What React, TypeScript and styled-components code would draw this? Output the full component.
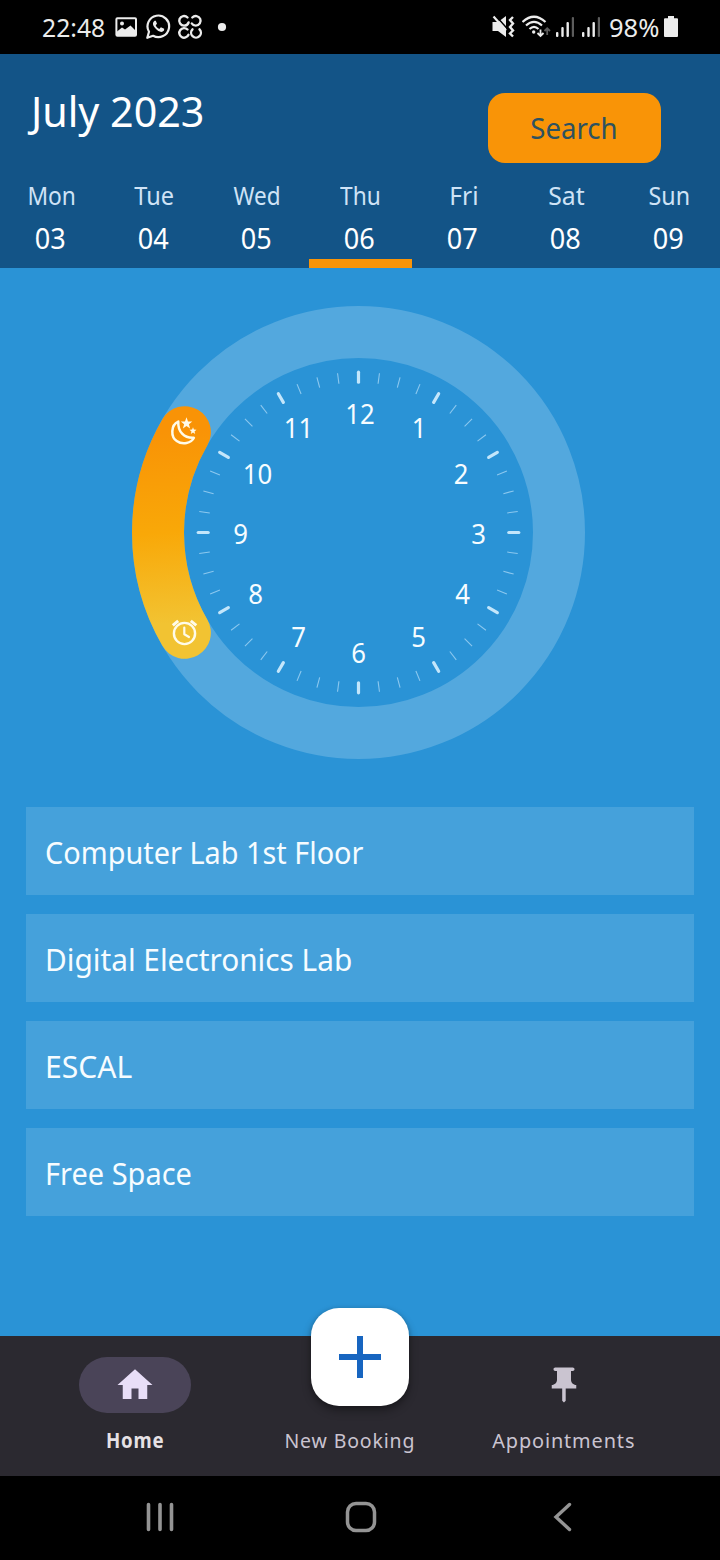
import React from "react";
import styled, { createGlobalStyle } from "styled-components";

const GlobalStyle = createGlobalStyle`
  * { box-sizing: border-box; }
  body { margin: 0; background: #000; font-family: "Noto Sans", "Open Sans", sans-serif; }
`;

const Screen = styled.div`
  width: 720px;
  height: 1560px;
  display: flex;
  flex-direction: column;
  background: #2a93d6;
  overflow: hidden;
`;

const Text = styled.span<{ $sx?: number; $origin?: string }>`
  display: inline-block;
  white-space: nowrap;
  transform: scaleX(${(p) => p.$sx ?? 1});
  transform-origin: ${(p) => p.$origin ?? "center"};
`;

const StatusBar = styled.div`
  height: 54px;
  flex: none;
  background: #000;
  color: #ececec;
  display: flex;
  justify-content: space-between;
  align-items: center;
  padding: 0 40px 0 42px;
  font-size: 26px;
  line-height: 54px;
`;

const StatusGroup = styled.div`
  display: flex;
  align-items: center;
  height: 54px;
`;

const Glyph = styled.svg<{ $ml?: number }>`
  display: block;
  flex: none;
  margin-left: ${(p) => p.$ml ?? 0}px;
`;

const StatusText = styled.div<{ $w: number; $ml?: number }>`
  width: ${(p) => p.$w}px;
  margin-left: ${(p) => p.$ml ?? 0}px;
  white-space: nowrap;
`;

const Header = styled.header`
  height: 214px;
  flex: none;
  background: #135487;
  display: flex;
  flex-direction: column;
`;

const HeaderTop = styled.div`
  height: 122px;
  display: flex;
  justify-content: space-between;
  padding: 39px 59px 0 31px;
`;

const Month = styled.h1`
  margin: -9px 0 0;
  font-size: 42.5px;
  font-weight: 400;
  line-height: 54px;
  color: #fff;
`;

const SearchButton = styled.button`
  width: 173px;
  height: 70px;
  border: 0;
  border-radius: 17px;
  background: #f99407;
  color: #2d5260;
  font: inherit;
  font-size: 29px;
  line-height: 68px;
  padding: 0 2px 0 0;
`;

const Week = styled.div`
  display: grid;
  grid-template-columns: repeat(7, 103px);
  height: 92px;
  margin-right: -1px;
`;

const Day = styled.div<{ $active?: boolean }>`
  display: flex;
  flex-direction: column;
  align-items: center;
  border-bottom: 9px solid ${(p) => (p.$active ? "#f99407" : "transparent")};
`;

const DayName = styled.div`
  font-size: 25px;
  line-height: 30px;
  margin-top: 4px;
  color: #cfe3f6;
`;

const DayNumber = styled.div`
  font-size: 28.5px;
  line-height: 36px;
  margin-top: 10px;
  padding-right: 2px;
  color: #fff;
`;

const Main = styled.main`
  height: 1068px;
  flex: none;
  display: flex;
  flex-direction: column;
`;

const ClockFace = styled.svg`
  display: block;
  margin: 32px 0 0 126px;
  flex: none;
  font-size: 28px;
`;

const RoomList = styled.ul`
  list-style: none;
  margin: 42px 26px 0;
  padding: 0;
  display: flex;
  flex-direction: column;
  gap: 19px;
`;

const Room = styled.li`
  height: 88px;
  background: #45a1db;
  color: #f6fcff;
  font-size: 31px;
  line-height: 90px;
  padding-left: 19px;
`;

const TabBar = styled.nav`
  position: relative;
  height: 140px;
  flex: none;
  background: #2b2930;
  display: flex;
  justify-content: center;
  padding-right: 21px;
`;

const Tab = styled.div<{ $active?: boolean }>`
  width: 214.5px;
  padding-top: 21px;
  display: flex;
  flex-direction: column;
  align-items: center;
  font-size: 20.5px;
  letter-spacing: 0.9px;
  line-height: 28px;
  font-weight: ${(p) => (p.$active ? 700 : 400)};
  color: ${(p) => (p.$active ? "#e6e1e5" : "#cac4d0")};
`;

const Indicator = styled.div<{ $active?: boolean }>`
  width: 112px;
  height: 56px;
  margin-bottom: 13px;
  border-radius: 28px;
  display: flex;
  align-items: center;
  justify-content: center;
  background: ${(p) => (p.$active ? "#4a4458" : "transparent")};
`;

const AddButton = styled.button`
  position: absolute;
  left: 311px;
  top: -28px;
  width: 98px;
  height: 98px;
  padding: 0;
  border: 0;
  border-radius: 28px;
  background: #fff;
  box-shadow: 0 5px 10px rgba(0, 0, 0, 0.32), 0 1px 4px rgba(0, 0, 0, 0.2);
  display: flex;
  align-items: center;
  justify-content: center;
`;

const SystemBar = styled.div`
  height: 84px;
  flex: none;
  background: #000;
  display: flex;
  align-items: center;
  padding: 0 0 2px 140px;
`;

const week: [string, string, number][] = [
  ["Mon", "03", 0.91],
  ["Tue", "04", 0.94],
  ["Wed", "05", 0.9],
  ["Thu", "06", 0.91],
  ["Fri", "07", 0.98],
  ["Sat", "08", 0.99],
  ["Sun", "09", 0.93],
];

const rooms: [string, number][] = [
  ["Computer Lab 1st Floor", 0.931],
  ["Digital Electronics Lab", 0.961],
  ["ESCAL", 0.97],
  ["Free Space", 0.935],
];

const numerals: [string, number, number][] = [
  ["12", 360, 414],
  ["1", 419, 428],
  ["2", 461, 473.5],
  ["3", 478.5, 533.5],
  ["4", 462.5, 593.5],
  ["5", 418.5, 636.5],
  ["6", 358.5, 653],
  ["7", 298.5, 636.5],
  ["8", 255.5, 593.5],
  ["9", 240.5, 534],
  ["10", 257.5, 474],
  ["11", 298.5, 428],
];

function Signal({ x, ml }: { x: number; ml: number }) {
  return (
    <Glyph $ml={ml} width="19" height="54" viewBox={`${x} 0 19 54`} fill="#ececec">
      <rect x={x} y="32" width="2.4" height="5" rx="1" />
      <rect x={x + 5.3} y="27" width="2.4" height="10" rx="1" />
      <rect x={x + 10.5} y="22" width="2.4" height="15" rx="1" />
      <rect x={x + 15.8} y="17" width="2.2" height="20" rx="1" fill="#5c5c5c" />
    </Glyph>
  );
}

function Clock() {
  const cx = 358.5;
  const cy = 532.5;
  return (
    <ClockFace width="466" height="465" viewBox="126 300 466 465">
      <defs>
        <linearGradient id="arc" gradientUnits="userSpaceOnUse" x1="160" y1="432" x2="176" y2="633">
          <stop offset="0" stopColor="#f99306" />
          <stop offset="0.5" stopColor="#f9a808" />
          <stop offset="0.95" stopColor="#f2c332" />
        </linearGradient>
      </defs>
      <circle cx={cx} cy={cy} r="200.5" fill="none" stroke="#53a8de" strokeWidth="52" />
      <path
        d="M184.9 632.8A200.5 200.5 0 0 1 184.9 432.2"
        fill="none"
        stroke="url(#arc)"
        strokeWidth="52"
        strokeLinecap="round"
      />
      {Array.from({ length: 48 }, (_, i) => {
        const major = i % 4 === 0;
        return (
          <line
            key={i}
            x1={cx}
            x2={cx}
            y1={major ? cy - 160.3 : cy - 160.6}
            y2={major ? cy - 150.3 : cy - 150}
            stroke={major ? "#c3e6fb" : "#8cc8ef"}
            strokeWidth={major ? 3.2 : 1.1}
            strokeLinecap={major ? "round" : "butt"}
            transform={`rotate(${i * 7.5} ${cx} ${cy})`}
          />
        );
      })}
      {numerals.map(([n, x, y]) => (
        <text key={n} fill="#f6fcff" textAnchor="middle" transform={`translate(${x} ${y + 10}) scale(0.92 1)`}>
          {n}
        </text>
      ))}
      <g fill="none" stroke="#fffbe8" strokeWidth="2.5" strokeLinejoin="round" strokeLinecap="round">
        <path d="M178.3 421.6C170.5 425 170.7 437 176.7 441C182.5 445.2 191.3 443.3 193.9 437.8C184 438.5 177.7 431.5 178.3 421.6Z" />
        <circle cx="184.5" cy="633.5" r="10.6" strokeWidth="2.4" />
        <path d="M184.3 627.5V634.2L189 637" strokeWidth="2.2" />
        <path d="M172.8 625.3L178.2 620.8M196.3 625.3L190.8 620.8" strokeWidth="3" strokeLinecap="butt" />
      </g>
      <g fill="#fffbe8">
        <path d="M186.5 417.3L188 421.4L192.3 421.5L188.9 424.2L190.1 428.4L186.5 426L182.9 428.4L184.1 424.2L180.8 421.5L185 421.4Z" />
        <path d="M193 427.2L193.9 429.6L196.5 429.8L194.5 431.4L195.2 434L193 432.5L190.8 434L191.5 431.4L189.5 429.8L192.1 429.6Z" />
      </g>
    </ClockFace>
  );
}

export default function App() {
  return (
    <Screen>
      <GlobalStyle />
      <StatusBar>
        <StatusGroup>
          <StatusText $w={73}>
            <Text $sx={0.95} $origin="left">22:48</Text>
          </StatusText>
          <Glyph width="22" height="54" viewBox="115 0 22 54">
            <rect x="116.4" y="18.2" width="19.6" height="17.6" rx="1" fill="none" stroke="#ececec" strokeWidth="2" />
            <path d="M117 36V31.5L122 27.5L125 29.5L130.5 25.5L136 31V36Z" fill="#ececec" />
            <circle cx="122" cy="23.5" r="2" fill="#ececec" />
          </Glyph>
          <Glyph $ml={9} width="26" height="54" viewBox="146 0 26 54">
            <path
              d="M147.3 37.8L149 31.8A10.8 10.8 0 1 1 153.1 35.8Z"
              fill="none" stroke="#ececec" strokeWidth="2.2" strokeLinejoin="round"
            />
            <path
              d="M154.6 20.8C152.3 22.5 152.4 25 155.3 28.3C158.3 31.7 161.8 33.2 164 30.6L164.2 28.8L160.9 27.2L159.3 28.9C157.6 28.2 156.4 26.9 155.7 25.3L157 23.8L155.8 20.8Z"
              fill="#ececec"
            />
          </Glyph>
          <Glyph $ml={5} width="26" height="54" viewBox="177 0 26 54" fill="none" stroke="#ececec" strokeWidth="2.4" strokeLinecap="round">
            <path d="M187.5 17.5A4.8 4.8 0 1 0 184.2 25.6Q187.5 25.6 188.6 22.5" />
            <path d="M192.3 17.5A4.8 4.8 0 1 1 195.8 25.6Q193 25.6 191.8 23.5" />
            <path d="M187.5 29.5A4.8 4.8 0 1 0 188.5 34.8" />
            <path d="M192.5 29.3A4.9 4.9 0 1 0 199.5 29.3" />
          </Glyph>
          <Glyph $ml={14} width="10" height="54" viewBox="217 0 10 54">
            <circle cx="222" cy="27" r="4.1" fill="#ececec" />
          </Glyph>
        </StatusGroup>
        <StatusGroup>
          <Glyph width="24" height="54" viewBox="491 0 24 54">
            <path d="M492.5 22H498L506 16V37L498 31H492.5Z" fill="#ececec" />
            <path d="M495.5 15.5L508 29.5" stroke="#000" strokeWidth="1.5" />
            <path d="M493.5 16.5L506 30.5" stroke="#ececec" strokeWidth="2.2" />
            <path d="M513 17L510 20L513 23.5L510 27L513 30.5L510 33.5L513 36.5" fill="none" stroke="#ececec" strokeWidth="2.4" />
          </Glyph>
          <Glyph $ml={7} width="30" height="54" viewBox="522 0 30 54" fill="none" stroke="#ececec" strokeWidth="2.2">
            <path d="M522.5 22Q534 11.5 545.5 22" />
            <path d="M526 25.5Q534 18.2 542 25.5" />
            <path d="M529.5 29Q534 24.7 538.5 29" />
            <circle cx="533.7" cy="32" r="1.7" fill="#ececec" stroke="none" />
            <path d="M540.5 29.5V36M537.5 33L540.5 36L543.5 33" strokeWidth="1.8" />
            <path d="M547.2 35V28.5M544.5 31L547.2 28.3L550 31" stroke="#5c5c5c" strokeWidth="1.8" />
          </Glyph>
          <Signal x={556} ml={4} />
          <Signal x={582} ml={7} />
          <StatusText $w={54} $ml={8}>
            <Text $sx={0.98} $origin="left">98%</Text>
          </StatusText>
          <Glyph width="17" height="54" viewBox="663 0 17 54">
            <path d="M668 16H674V18.3H677Q678 18.3 678 19.3V36Q678 37 677 37H665Q664 37 664 36V19.3Q664 18.3 665 18.3H668Z" fill="#ececec" />
          </Glyph>
        </StatusGroup>
      </StatusBar>

      <Header>
        <HeaderTop>
          <Month><Text $sx={0.97} $origin="left">July 2023</Text></Month>
          <SearchButton><Text $sx={0.95}>Search</Text></SearchButton>
        </HeaderTop>
        <Week>
          {week.map(([name, num, sx]) => (
            <Day key={num} $active={num === "06"}>
              <DayName><Text $sx={sx}>{name}</Text></DayName>
              <DayNumber><Text $sx={0.95}>{num}</Text></DayNumber>
            </Day>
          ))}
        </Week>
      </Header>

      <Main>
        <Clock />
        <RoomList>
          {rooms.map(([name, sx]) => (
            <Room key={name}><Text $sx={sx} $origin="left">{name}</Text></Room>
          ))}
        </RoomList>
      </Main>

      <TabBar>
        <Tab $active>
          <Indicator $active>
            <svg width="42" height="42" viewBox="0 0 24 24" fill="#e8def8">
              <path d="M10 20v-6h4v6h5v-8h3L12 3 2 12h3v8z" />
            </svg>
          </Indicator>
          <Text $sx={0.91}>Home</Text>
        </Tab>
        <Tab>
          <Indicator />
          <Text $sx={0.95}>New Booking</Text>
        </Tab>
        <Tab>
          <Indicator>
            <svg width="42" height="42" viewBox="0 0 24 24" fill="#cac4d0">
              <path d="M16 9V4h1c.55 0 1-.45 1-1s-.45-1-1-1H7c-.55 0-1 .45-1 1s.45 1 1 1h1v5c0 1.66-1.34 3-3 3v2h5.97v7l1 1 1-1v-7H19v-2c-1.66 0-3-1.34-3-3z" />
            </svg>
          </Indicator>
          <Text $sx={0.97}>Appointments</Text>
        </Tab>
        <AddButton aria-label="New booking">
          <svg width="42" height="42" viewBox="0 0 42 42" stroke="#1765c0" strokeWidth="6">
            <path d="M21 0V42M0 21H42" />
          </svg>
        </AddButton>
      </TabBar>

      <SystemBar>
        <Glyph $ml={5} width="30" height="32" viewBox="145 1501 30 32" stroke="#949494" strokeWidth="3.6" strokeLinecap="round">
          <path d="M148.5 1504.5V1529.5M160 1504.5V1529.5M171.5 1504.5V1529.5" />
        </Glyph>
        <Glyph $ml={169} width="34" height="34" viewBox="344 1500 34 34">
          <rect x="347.5" y="1503.5" width="27" height="27" rx="8.5" fill="none" stroke="#949494" strokeWidth="3.5" />
        </Glyph>
        <Glyph $ml={173} width="24" height="34" viewBox="551 1500 24 34" fill="none" stroke="#949494" strokeWidth="3.4" strokeLinecap="round">
          <path d="M569.5 1504.5L556 1517L569.5 1529.5" />
        </Glyph>
      </SystemBar>
    </Screen>
  );
}
